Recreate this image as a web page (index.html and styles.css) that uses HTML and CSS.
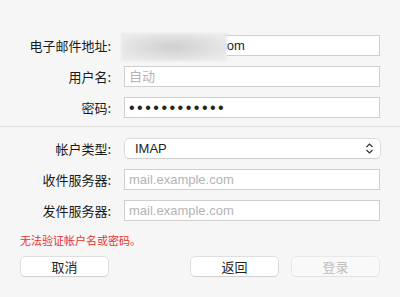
FILE: index.html
```html
<!DOCTYPE html>
<html lang="zh-CN">
<head>
    <meta charset="UTF-8" />
    <title>添加帐户</title>
    <link rel="stylesheet" href="styles.css">
</head>
<body>
    <div class="sheet">
        <div class="section top">
            <div class="row">
                <label for="email">电子邮件地址:</label>
                <div class="field-wrap">
                    <input id="email" class="field" type="text" value="user@example.com">
                    <div class="blur"></div>
                </div>
            </div>
            <div class="row">
                <label for="user">用户名:</label>
                <input id="user" class="field" type="text" placeholder="自动">
            </div>
            <div class="row">
                <label for="pass">密码:</label>
                <input id="pass" class="field secret" type="password" value="abcdefghijkl">
            </div>
        </div>

        <div class="section bottom">
            <div class="row">
                <label for="type">帐户类型:</label>
                <div class="select">
                    <span>IMAP</span>
                    <svg class="updown" width="9" height="13" viewBox="0 0 9 13">
                        <path d="M1.5 5 L4.5 2 L7.5 5 M1.5 8 L4.5 11 L7.5 8" fill="none" stroke="#333" stroke-width="1.2"/>
                    </svg>
                </div>
            </div>
            <div class="row">
                <label for="incoming">收件服务器:</label>
                <input id="incoming" class="field" type="text" placeholder="mail.example.com">
            </div>
            <div class="row">
                <label for="outgoing">发件服务器:</label>
                <input id="outgoing" class="field" type="text" placeholder="mail.example.com">
            </div>

            <p class="error">无法验证帐户名或密码。</p>

            <div class="actions">
                <button class="btn">取消</button>
                <div class="right">
                    <button class="btn">返回</button>
                    <button class="btn" disabled>登录</button>
                </div>
            </div>
        </div>
    </div>
</body>
</html>
```

FILE: styles.css
```css
* {
    box-sizing: border-box;
    margin: 0;
    padding: 0;
}

body {
    width: 400px;
    height: 297px;
    background-color: #f6f6f6;
    font-family: "Liberation Sans", "Noto Sans CJK SC", sans-serif;
    font-size: 13px;
    color: #1e1e1e;
    overflow: hidden;
}

.section {
    display: flex;
    flex-direction: column;
    gap: 10px;
}

.top {
    padding: 35px 0 8px;
    border-bottom: 1px solid #dedede;
}

.bottom {
    padding-top: 11px;
}

.row {
    display: grid;
    grid-template-columns: 111px 256px;
    column-gap: 13px;
    align-items: center;
    height: 21px;
}

label {
    text-align: right;
    font-family: "Noto Sans CJK SC", sans-serif;
    font-size: 13px;
    color: #1a1a1a;
}

.field {
    width: 256px;
    height: 21px;
    border: 1px solid #cfcfcf;
    background-color: #fff;
    padding: 0 4px;
    font-family: "Liberation Sans", "Noto Sans CJK SC", sans-serif;
    font-size: 13px;
    color: #1e1e1e;
    outline: none;
}

.field::placeholder {
    color: #b4b4b4;
}

.secret {
    font-size: 16px;
    letter-spacing: 2.5px;
    color: #222;
}

.field-wrap {
    position: relative;
}

.blur {
    position: absolute;
    left: -3px;
    top: -2px;
    width: 106px;
    height: 28px;
    background: radial-gradient(ellipse at 50% 50%, #cfcfcf 0%, #dedede 45%, #eaeaea 80%);
    filter: blur(1px);
}

.select {
    display: flex;
    align-items: center;
    justify-content: space-between;
    width: 255px;
    height: 19px;
    margin-left: 1px;
    padding: 0 6px 0 10px;
    background-color: #fff;
    border-radius: 4px;
    box-shadow: 0 0 0 0.5px #c4c4c4, 0 1px 1px rgba(0, 0, 0, 0.12);
    font-size: 13px;
    color: #222;
}

.error {
    padding: 0 0 0 20px;
    margin-top: 1px;
    font-family: "Noto Sans CJK SC", sans-serif;
    font-size: 11px;
    color: #e8322e;
    line-height: 16px;
}

.actions {
    display: flex;
    justify-content: space-between;
    padding: 0 21px 0 21px;
    margin-top: -1px;
}

.right {
    display: flex;
    gap: 14px;
}

.btn {
    width: 87px;
    height: 19px;
    border: none;
    border-radius: 4px;
    background-color: #fff;
    box-shadow: 0 0 0 0.5px #c8c8c8, 0 1px 1px rgba(0, 0, 0, 0.12);
    font-family: "Noto Sans CJK SC", sans-serif;
    font-size: 13px;
    color: #1e1e1e;
    line-height: 19px;
}

.btn:disabled {
    background-color: #f9f9f9;
    color: #bdbdbd;
    box-shadow: 0 0 0 0.5px #dadada, 0 1px 1px rgba(0, 0, 0, 0.05);
}
```
